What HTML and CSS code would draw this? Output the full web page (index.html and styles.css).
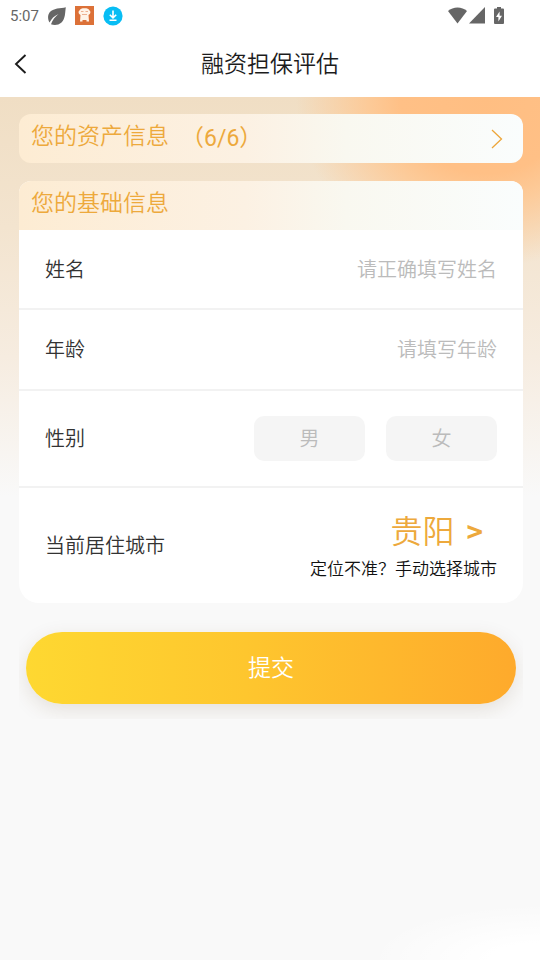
FILE: index.html
```
<!DOCTYPE html>
<html lang="zh-CN">
<head>
<meta charset="utf-8">
<meta name="viewport" content="width=device-width, initial-scale=1">
<title>融资担保评估</title>
<link rel="stylesheet" href="styles.css">
</head>
<body>
<div class="status">
  <span class="time">5:07</span>
  <svg width="18" height="18" viewBox="0 0 18 18" aria-hidden="true"><path fill="#666" d="M17.800 .2C13 1.500 5 .8 1.500 5.500C-.5 8.500-.3 12.500 1.500 15.500C3.500 11.800 6 9 10.500 7C7 10 4.500 12.800 3 17.200C6 18.500 10.500 18.300 13.500 15.500C17.500 11.500 17 5.500 17.800 .2Z"/></svg>
  <svg width="19" height="19" viewBox="0 0 19 19" aria-hidden="true"><path fill="#dc7138" d="M0 0h19v19H0z"/><path fill="#fff4e8" d="M4.500 4.500C5 2.800 7 2.200 9.500 2.200s4.500.600 5 2.300c1 .300 1.300 2.500.300 3.500l-1.300 1 .5 6.500H11.500V14h-4v1.500H5l.500-6.500-1.300-1C3.200 7 3.500 4.800 4.500 4.500Z"/><path fill="none" stroke="#e9a07a" stroke-width=".8" d="M6 5.500h2.500M10.500 5.500H13M7 8.500h5"/></svg>
  <svg width="20" height="20" viewBox="0 0 20 20" aria-hidden="true"><circle cx="10" cy="10" r="9.600" fill="#08bdf4"/><path fill="none" stroke="#fff" stroke-width="1.600" d="M10 4.500v7M6.800 8.700l3.200 3.200 3.200-3.200M6.500 14.200h7"/></svg>
  <span class="signals">
    <svg width="19" height="17" viewBox="0 0 19 17" aria-hidden="true"><path fill="#666" d="M0 4C5-.8 14-.8 19 4L9.500 16.500Z"/></svg>
    <svg width="16" height="17" viewBox="0 0 16 17" aria-hidden="true"><path fill="#666" d="M16 0v16.500H0Z"/></svg>
    <svg class="battery" width="10" height="17" viewBox="0 0 10 17" aria-hidden="true"><path fill="#666" d="M3 0h4v1.500h2q1 0 1 1V16q0 1-1 1H1q-1 0-1-1V2.500q0-1 1-1h2Z"/><path fill="#fff" d="M5.600 4.500 2 10h2.400v4.500L8 8.700H5.600Z"/></svg>
  </span>
</div>
<header class="nav">
  <button class="back" type="button" aria-label="返回"><svg width="13" height="20" viewBox="0 0 13 20"><path fill="none" stroke="#1c1c1c" stroke-width="1.900" d="M11.500 1 2 10l9.500 9"/></svg></button>
  <h1>融资担保评估</h1>
</header>
<main class="page">
  <a class="assets" href="#assets">
    <span>您的资产信息</span><span class="count">（6/6）</span>
    <svg class="more" width="12" height="20" viewBox="0 0 12 20" aria-hidden="true"><path fill="none" stroke="#eda63a" stroke-width="1.300" d="M1 1l9.500 9L1 19"/></svg>
  </a>
  <form>
    <section class="card">
      <h2>您的基础信息</h2>
      <div class="row"><label for="name">姓名</label><input id="name" type="text" placeholder="请正确填写姓名"></div>
      <div class="row"><label for="age">年龄</label><input id="age" type="text" inputmode="numeric" placeholder="请填写年龄"></div>
      <div class="row gender" role="group" aria-labelledby="gender">
        <span id="gender">性别</span>
        <div class="options"><button type="button">男</button><button type="button">女</button></div>
      </div>
      <div class="row city">
        <span>当前居住城市</span>
        <div class="place">
          <button type="button" class="pick">贵阳<b>&gt;</b></button>
          <a href="#city">定位不准？手动选择城市</a>
        </div>
      </div>
    </section>
    <div class="submit"><button type="submit">提交</button></div>
  </form>
</main>
</body>
</html>
```
FILE: styles.css
```
* { box-sizing: border-box; }
body {
  margin: 0;
  min-height: 100vh;
  display: flex;
  flex-direction: column;
  background: #f9f9f9;
  color: #333;
  font-family: "Noto Sans CJK SC", sans-serif;
  font-size: 20px;
  font-weight: 350;
}
button, input { font: inherit; border: 0; padding: 0; margin: 0; background: none; }
a { color: inherit; text-decoration: none; }
svg { display: block; flex: none; }
h1, h2 { margin: 0; font-weight: inherit; font-size: 23px; }

.status {
  display: flex;
  align-items: center;
  gap: 9px;
  height: 31px;
  padding: 0 36px 0 10px;
  background: #fff;
}
.time { font: 400 15px/20px Roboto, sans-serif; color: #666; }
.signals { display: flex; gap: 2px; margin-left: auto; }
.battery { margin-left: 7px; }

.nav {
  display: grid;
  grid-template-columns: 40px 1fr 40px;
  align-items: center;
  height: 66px;
  background: #fff;
  color: #1c1c1c;
}
.nav h1 { text-align: center; line-height: 34px; padding-bottom: 4px; }
.back { padding-left: 14px; height: 40px; }

.page {
  flex: 1;
  padding: 17px 17px 17px 19px;
  background:
    radial-gradient(ellipse 170px 56px at 100% 100%, #fff 30%, rgba(255, 255, 255, 0)),
    radial-gradient(ellipse 190px 170px at 90% 0, #ffbe82 0, #ffc086 45%, rgba(255, 197, 141, .8) 62%, rgba(255, 197, 141, 0)),
    linear-gradient(#f0dec4 0, #f3e4cf 130px, #f6ece0 260px, #f9f9f9 400px);
}
.assets, .card h2 {
  height: 49px;
  padding: 0 20px 0 12px;
  background: linear-gradient(90deg, #fdecd3, #fcf1e3 45%, #f9f8f0 65%, #fafdfd);
  color: #eda93c;
  font-size: 23px;
  line-height: 41px;
}
.assets { display: flex; border-radius: 12px; }
.count { margin-left: 12px; font-family: Roboto, "Noto Sans CJK SC", sans-serif; font-weight: 400; line-height: 49px; }
.more { margin: auto 0 auto auto; }

.card {
  margin-top: 18px;
  background: #fff;
  border-radius: 12px 12px 20px 20px;
  overflow: hidden;
}
.row {
  display: flex;
  align-items: center;
  justify-content: space-between;
  gap: 20px;
  height: 81px;
  padding: 0 26px;
  border-bottom: 2px solid #f2f2f2;
}
.row:nth-child(2) { height: 80px; }
.row label, .row > span, .row input { padding-bottom: 2px; }
.row input { flex: 1; min-width: 0; height: 40px; text-align: right; color: #333; outline: 0; }
.row input::placeholder { color: #bbb; opacity: 1; }
.gender { height: 97px; }
.options { display: flex; gap: 21px; }
.options button {
  width: 111px;
  height: 45px;
  padding-bottom: 3px;
  border-radius: 10px;
  background: #f5f5f5;
  color: #bbb;
}
.city { height: 115px; border: 0; }
.place { display: flex; flex-direction: column; align-items: flex-end; padding-bottom: 4px; }
.place a { color: #111; font-size: 17px; line-height: 26px; }
.pick {
  display: flex;
  gap: 12px;
  margin-right: 14px;
  color: #eda93c;
  font-size: 32px;
  line-height: 44px;
}
.pick b { font-size: 28px; font-weight: 700; line-height: 48px; }

.submit { padding: 29px 7px 15px; overflow: hidden; }
.submit button {
  width: 100%;
  height: 72px;
  padding-bottom: 4px;
  border-radius: 36px;
  background: linear-gradient(90deg, #fed831, #fec62e 45%, #feaa2c);
  box-shadow: 0 6px 20px rgba(90, 60, 20, .13);
  color: #fff;
  font-size: 23px;
}
```
